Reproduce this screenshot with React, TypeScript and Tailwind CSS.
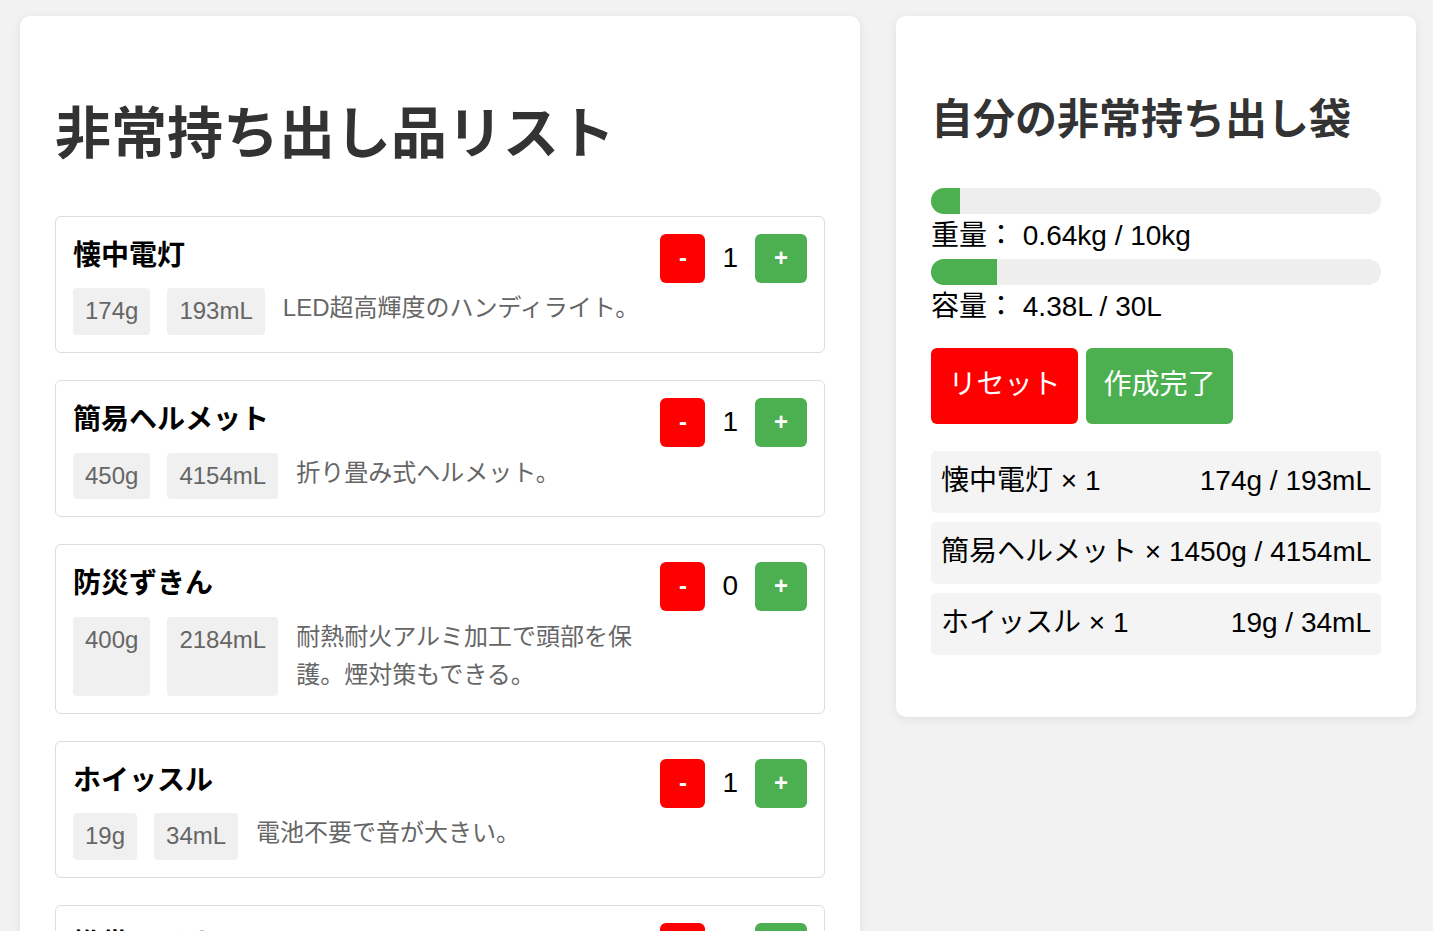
import React, { useState } from "react";

interface Item {
  id: number;
  name: string;
  weight: number;
  volume: number;
  description: string;
}

const ITEMS: Item[] = [
  { id: 1, name: "懐中電灯", weight: 174, volume: 193, description: "LED超高輝度のハンディライト。" },
  { id: 2, name: "簡易ヘルメット", weight: 450, volume: 4154, description: "折り畳み式ヘルメット。" },
  { id: 3, name: "防災ずきん", weight: 400, volume: 2184, description: "耐熱耐火アルミ加工で頭部を保護。煙対策もできる。" },
  { id: 4, name: "ホイッスル", weight: 19, volume: 34, description: "電池不要で音が大きい。" },
  { id: 5, name: "携帯ラジオ", weight: 250, volume: 500, description: "手回し充電対応のAM/FMラジオ。" },
];

const MAX_WEIGHT = 10000;
const MAX_VOLUME = 30000;

const ItemCard: React.FC<{
  item: Item;
  count: number;
  onChange: (delta: number) => void;
}> = ({ item, count, onChange }) => (
  <div className="flex items-start gap-[14px] rounded-[6px] border border-[#ddd] bg-white p-[17px]">
    <div className="min-w-0 flex-1">
      <h3 className="mb-[10px] text-[28px] leading-[1.6] font-bold text-black">{item.name}</h3>
      <div className="flex gap-[17px] text-[24px] leading-[1.6]">
        <span className="rounded-[4px] bg-[#f0f0f0] px-[12px] py-[4px] text-[#666]">{item.weight}g</span>
        <span className="rounded-[4px] bg-[#f0f0f0] px-[12px] py-[4px] text-[#666]">{item.volume}mL</span>
        <p className="min-w-0 flex-1 py-[1px] pl-[1px] text-[#666]">{item.description}</p>
      </div>
    </div>
    <div className="flex items-center gap-[17px]">
      <button
        onClick={() => onChange(-1)}
        className="h-[49px] w-[45px] rounded-[6px] bg-[#ff0000] text-[24px] font-bold text-white"
      >
        -
      </button>
      <span className="text-[28px] leading-[1.6] text-black">{count}</span>
      <button
        onClick={() => onChange(1)}
        className="h-[49px] w-[52px] rounded-[6px] bg-[#4caf50] text-[24px] font-bold text-white"
      >
        +
      </button>
    </div>
  </div>
);

const ProgressBar: React.FC<{ ratio: number }> = ({ ratio }) => (
  <div className="h-[26px] w-full overflow-hidden rounded-full bg-[#eee]">
    <div className="h-full bg-[#4caf50]" style={{ width: `${Math.min(ratio, 1) * 100}%` }} />
  </div>
);

export default function App() {
  const [counts, setCounts] = useState<Record<number, number>>({ 1: 1, 2: 1, 3: 0, 4: 1, 5: 0 });

  const change = (id: number, delta: number) =>
    setCounts((prev) => ({ ...prev, [id]: Math.max(0, (prev[id] || 0) + delta) }));

  const selected = ITEMS.filter((i) => counts[i.id] > 0);
  const totalWeight = selected.reduce((s, i) => s + i.weight * counts[i.id], 0);
  const totalVolume = selected.reduce((s, i) => s + i.volume * counts[i.id], 0);

  return (
    <div className="flex min-h-screen items-start gap-[36px] bg-[#f2f2f2] pt-[16px] pl-[20px] font-['Liberation_Sans','Noto_Sans_CJK_JP',sans-serif] text-black">
      <div className="w-[840px] shrink-0 rounded-[10px] bg-white px-[35px] pt-[35px] pb-[35px] shadow-[0_2px_10px_rgba(0,0,0,0.08)]">
        <h1 className="mt-[37.5px] mb-[37.5px] text-[56px] leading-[1.6] font-bold text-[#333]">
          非常持ち出し品リスト
        </h1>
        <div className="flex flex-col gap-[27px]">
          {ITEMS.map((item) => (
            <ItemCard key={item.id} item={item} count={counts[item.id]} onChange={(d) => change(item.id, d)} />
          ))}
        </div>
      </div>

      <div className="w-[520px] shrink-0 rounded-[10px] bg-white p-[35px] shadow-[0_2px_10px_rgba(0,0,0,0.08)]">
        <h2 className="mt-[35px] mb-[35px] text-[42px] leading-[1.6] font-bold text-[#333]">
          自分の非常持ち出し袋
        </h2>
        <div className="text-[28px] leading-[1.6]">
          <ProgressBar ratio={totalWeight / MAX_WEIGHT} />
          <div>重量： {(totalWeight / 1000).toFixed(2)}kg / {MAX_WEIGHT / 1000}kg</div>
          <ProgressBar ratio={totalVolume / MAX_VOLUME} />
          <div>容量： {(totalVolume / 1000).toFixed(2)}L / {MAX_VOLUME / 1000}L</div>
        </div>
        <div className="mt-[18px] flex gap-[8px] text-[28px] leading-[1.6]">
          <button
            onClick={() => setCounts({ 1: 0, 2: 0, 3: 0, 4: 0, 5: 0 })}
            className="rounded-[6px] bg-[#ff0000] px-[17.5px] py-[15.6px] text-white"
          >
            リセット
          </button>
          <button className="rounded-[6px] bg-[#4caf50] px-[17.5px] py-[15.6px] text-white">作成完了</button>
        </div>
        <ul className="mt-[27px] mb-[27px] flex flex-col gap-[9.3px] text-[28px] leading-[1.6]">
          {selected.map((item) => (
            <li
              key={item.id}
              className="flex justify-between rounded-[5px] bg-[#f4f4f4] px-[10px] py-[8.5px] whitespace-nowrap"
            >
              <span>
                {item.name} × {counts[item.id]}
              </span>
              <span>
                {item.weight * counts[item.id]}g / {item.volume * counts[item.id]}mL
              </span>
            </li>
          ))}
        </ul>
      </div>
    </div>
  );
}
